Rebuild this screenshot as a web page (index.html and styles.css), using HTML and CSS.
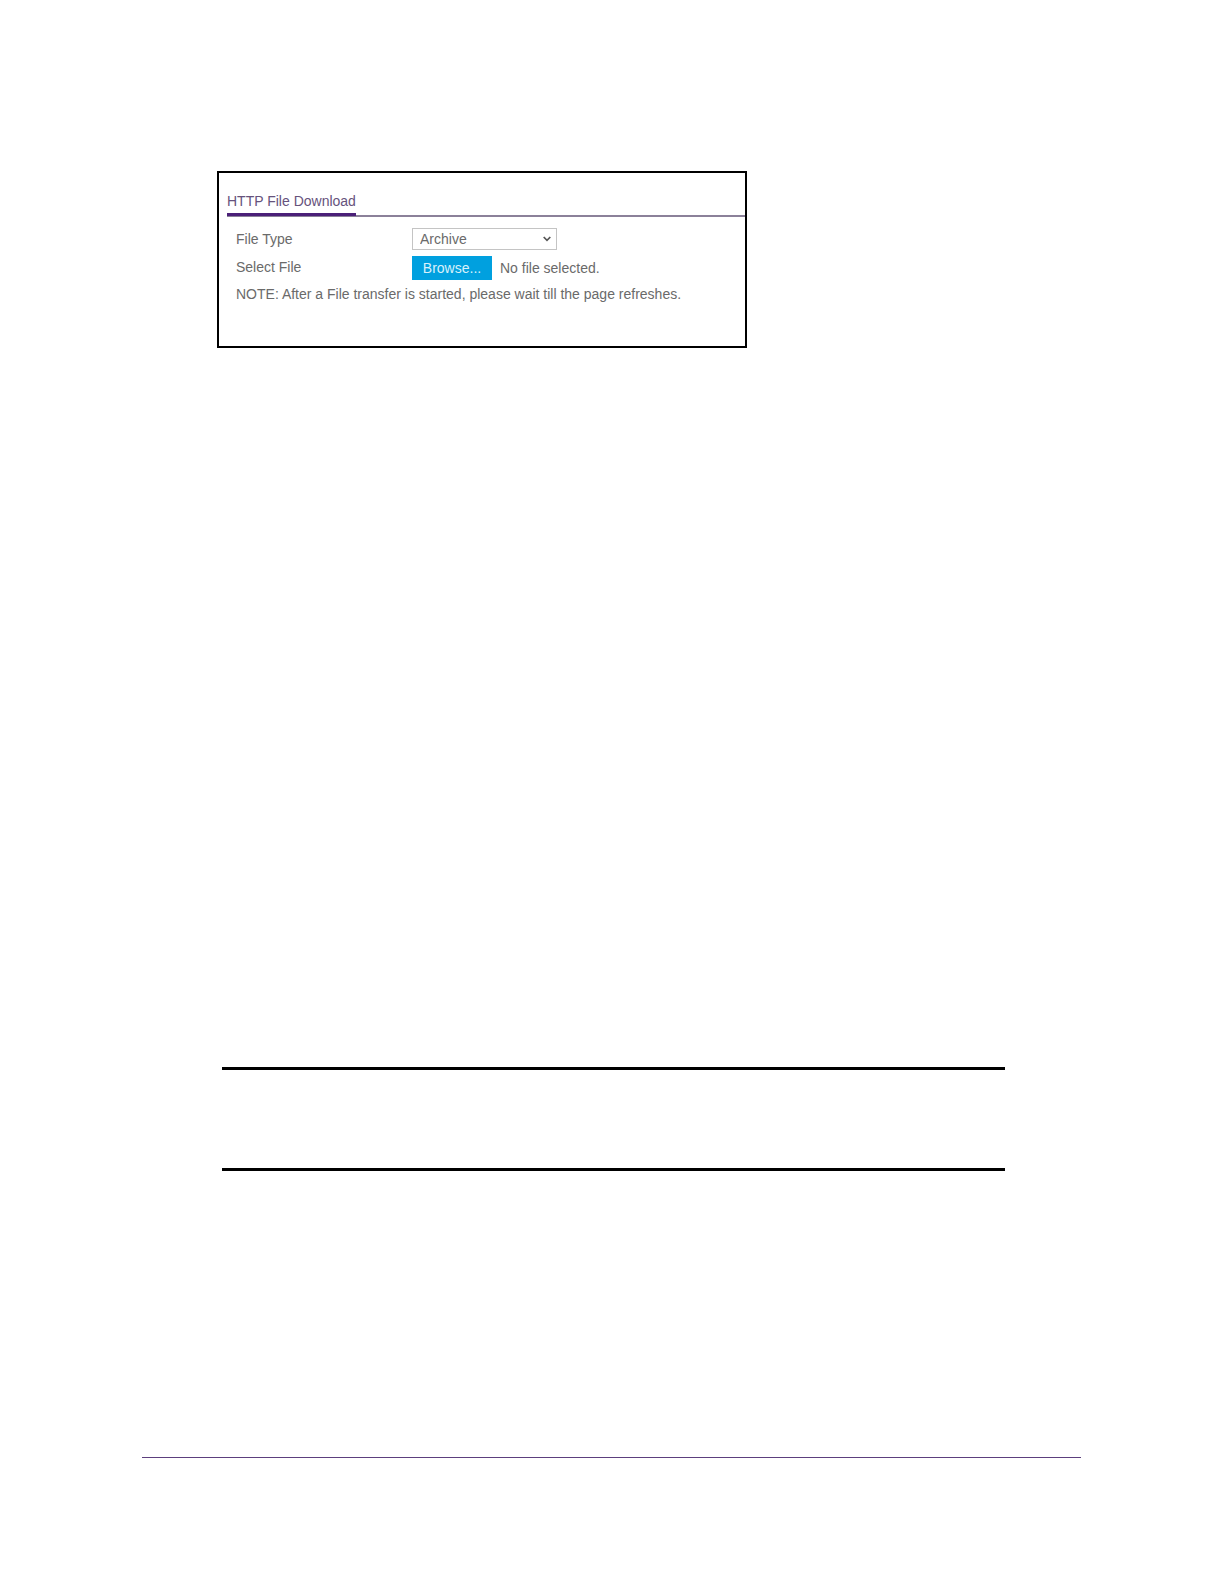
FILE: index.html
```html
<!DOCTYPE html>
<html lang="en">
<head>
<meta charset="utf-8">
<title>HTTP File Download</title>
<link rel="stylesheet" href="styles.css">
</head>
<body>
<main class="page">
  <form class="panel">
    <header class="panel-header">
      <h1 class="panel-title">HTTP File Download</h1>
    </header>
    <div class="fields">
      <label class="label" for="file-type">File Type</label>
      <div class="select-box">
        <select class="select" id="file-type">
          <option>Archive</option>
        </select>
        <svg class="chevron" viewBox="0 0 8 6" aria-hidden="true"><path d="M.7 1 4 4.3 7.3 1" fill="none" stroke="#555" stroke-width="1.7"/></svg>
      </div>
      <label class="label" for="browse">Select File</label>
      <div class="file-picker">
        <button class="browse" id="browse" type="button">Browse...</button>
        <output class="file-name" for="browse">No file selected.</output>
      </div>
    </div>
    <p class="note">NOTE: After a File transfer is started, please wait till the page refreshes.</p>
  </form>
  <section class="callout"></section>
  <footer class="footer"></footer>
</main>
</body>
</html>
```
FILE: styles.css
```css
* {
  box-sizing: border-box;
}

body {
  margin: 0;
  background: #fff;
  color: #6a6a6a;
  font: 14px/20px "Liberation Sans", Arial, sans-serif;
}

.page {
  padding: 171px 142px 126px;
}

.panel {
  max-width: 530px;
  margin-left: 75px;
  padding: 18px 0 42px 8px;
  border: 2px solid #000;
}

.panel-header {
  display: flex;
  border-bottom: 2px solid #8b8199;
}

.panel-title {
  margin: 0 0 -1px;
  padding-bottom: 2px;
  border-bottom: 3px solid #4b2078;
  color: #66527c;
  font-size: 14px;
  font-weight: 400;
  line-height: 20px;
}

.fields {
  display: grid;
  grid-template-columns: 176px 1fr;
  row-gap: 6px;
  padding: 11px 0 0 9px;
}

.label {
  line-height: 22px;
}

.select-box {
  position: relative;
  width: 145px;
}

.select {
  display: block;
  width: 100%;
  height: 22px;
  padding: 0 7px;
  border: 1px solid #c4c4c4;
  border-radius: 0;
  background: #fff;
  color: #6a6a6a;
  font: inherit;
  line-height: 20px;
  appearance: none;
}

.chevron {
  position: absolute;
  top: 8px;
  right: 6px;
  width: 8px;
  height: 6px;
}

.file-picker {
  display: flex;
  align-items: center;
  gap: 8px;
}

.browse {
  width: 80px;
  height: 24px;
  padding: 0;
  border: 0;
  background: #00a0df;
  color: #d9f1fb;
  font: inherit;
}

.note {
  margin: 4px 0 0;
  padding-left: 9px;
}

.callout {
  height: 104px;
  margin: 719px 77px 286px 80px;
  border: solid #000;
  border-width: 3px 0;
}

.footer {
  margin-right: 1px;
  border-top: 1px solid #5c3f7d;
}
```
